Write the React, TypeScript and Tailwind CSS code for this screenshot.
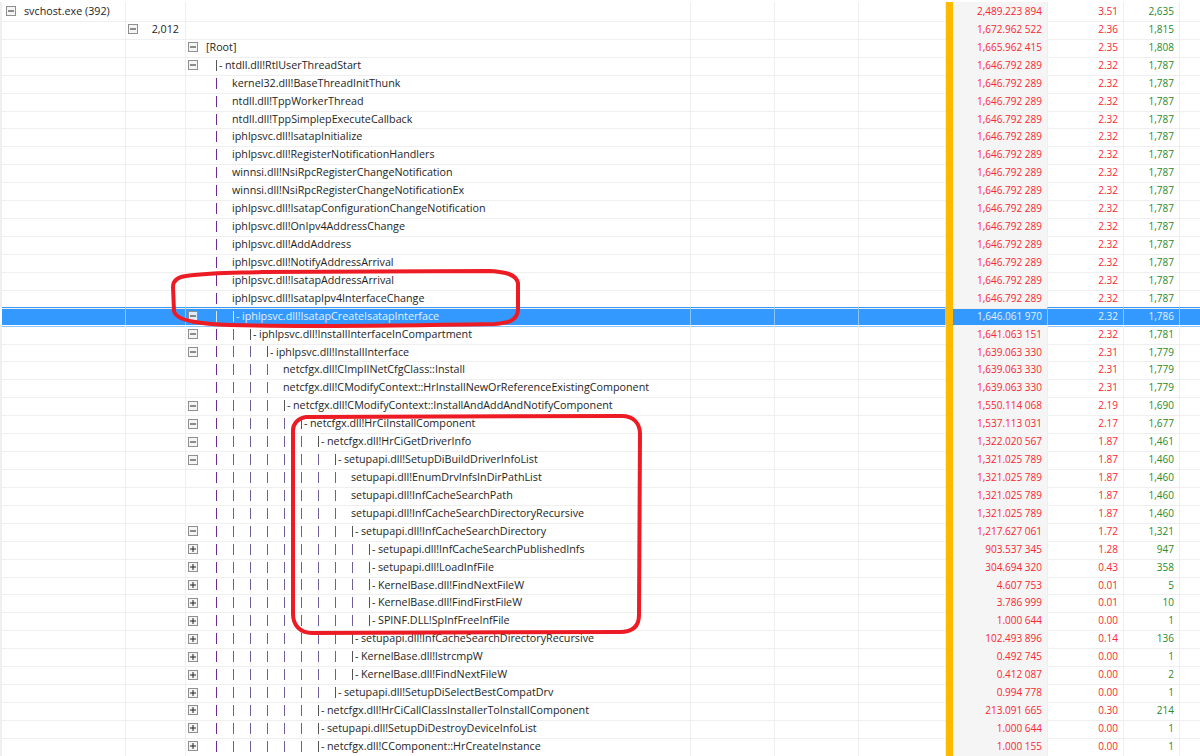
import React from 'react';

type Row = {
  col?: 1 | 2 | 3;
  exp?: '-' | '+';
  bars?: number;
  branch?: boolean;
  name: string;
  time: string;
  pct: string;
  count: string;
};

const t = (name: string, bars: number, branch: boolean, exp: '-' | '+' | undefined, time: string, pct: string, count: string): Row => ({
  col: 3, name, bars, branch, exp, time, pct, count,
});

const base: [string, string, string] = ['1,646.792 289', '2.32', '1,787'];
const cfg: [string, string, string] = ['1,639.063 330', '2.31', '1,779'];
const drv: [string, string, string] = ['1,321.025 789', '1.87', '1,460'];

const rows: Row[] = [
  { col: 1, exp: '-', name: 'svchost.exe (392)', time: '2,489.223 894', pct: '3.51', count: '2,635' },
  { col: 2, exp: '-', name: '2,012', time: '1,672.962 522', pct: '2.36', count: '1,815' },
  { col: 3, exp: '-', name: '[Root]', time: '1,665.962 415', pct: '2.35', count: '1,808' },
  t('ntdll.dll!RtlUserThreadStart', 0, true, '-', ...base),
  t('kernel32.dll!BaseThreadInitThunk', 1, false, undefined, ...base),
  t('ntdll.dll!TppWorkerThread', 1, false, undefined, ...base),
  t('ntdll.dll!TppSimplepExecuteCallback', 1, false, undefined, ...base),
  t('iphlpsvc.dll!IsatapInitialize', 1, false, undefined, ...base),
  t('iphlpsvc.dll!RegisterNotificationHandlers', 1, false, undefined, ...base),
  t('winnsi.dll!NsiRpcRegisterChangeNotification', 1, false, undefined, ...base),
  t('winnsi.dll!NsiRpcRegisterChangeNotificationEx', 1, false, undefined, ...base),
  t('iphlpsvc.dll!IsatapConfigurationChangeNotification', 1, false, undefined, ...base),
  t('iphlpsvc.dll!OnIpv4AddressChange', 1, false, undefined, ...base),
  t('iphlpsvc.dll!AddAddress', 1, false, undefined, ...base),
  t('iphlpsvc.dll!NotifyAddressArrival', 1, false, undefined, ...base),
  t('iphlpsvc.dll!IsatapAddressArrival', 1, false, undefined, ...base),
  t('iphlpsvc.dll!IsatapIpv4InterfaceChange', 1, false, undefined, ...base),
  t('iphlpsvc.dll!IsatapCreateIsatapInterface', 1, true, '-', '1,646.061 970', '2.32', '1,786'),
  t('iphlpsvc.dll!InstallInterfaceInCompartment', 2, true, '-', '1,641.063 151', '2.32', '1,781'),
  t('iphlpsvc.dll!InstallInterface', 3, true, '-', ...cfg),
  t('netcfgx.dll!CImplINetCfgClass::Install', 4, false, undefined, ...cfg),
  t('netcfgx.dll!CModifyContext::HrInstallNewOrReferenceExistingComponent', 4, false, undefined, ...cfg),
  t('netcfgx.dll!CModifyContext::InstallAndAddAndNotifyComponent', 4, true, '-', '1,550.114 068', '2.19', '1,690'),
  t('netcfgx.dll!HrCiInstallComponent', 5, true, '-', '1,537.113 031', '2.17', '1,677'),
  t('netcfgx.dll!HrCiGetDriverInfo', 6, true, '-', '1,322.020 567', '1.87', '1,461'),
  t('setupapi.dll!SetupDiBuildDriverInfoList', 7, true, '-', ...drv),
  t('setupapi.dll!EnumDrvInfsInDirPathList', 8, false, undefined, ...drv),
  t('setupapi.dll!InfCacheSearchPath', 8, false, undefined, ...drv),
  t('setupapi.dll!InfCacheSearchDirectoryRecursive', 8, false, undefined, ...drv),
  t('setupapi.dll!InfCacheSearchDirectory', 8, true, '-', '1,217.627 061', '1.72', '1,321'),
  t('setupapi.dll!InfCacheSearchPublishedInfs', 9, true, '+', '903.537 345', '1.28', '947'),
  t('setupapi.dll!LoadInfFile', 9, true, '+', '304.694 320', '0.43', '358'),
  t('KernelBase.dll!FindNextFileW', 9, true, '+', '4.607 753', '0.01', '5'),
  t('KernelBase.dll!FindFirstFileW', 9, true, '+', '3.786 999', '0.01', '10'),
  t('SPINF.DLL!SpInfFreeInfFile', 9, true, '+', '1.000 644', '0.00', '1'),
  t('setupapi.dll!InfCacheSearchDirectoryRecursive', 8, true, '+', '102.493 896', '0.14', '136'),
  t('KernelBase.dll!lstrcmpW', 8, true, '+', '0.492 745', '0.00', '1'),
  t('KernelBase.dll!FindNextFileW', 8, true, '+', '0.412 087', '0.00', '2'),
  t('setupapi.dll!SetupDiSelectBestCompatDrv', 7, true, '+', '0.994 778', '0.00', '1'),
  t('netcfgx.dll!HrCiCallClassInstallerToInstallComponent', 6, true, '+', '213.091 665', '0.30', '214'),
  t('setupapi.dll!SetupDiDestroyDeviceInfoList', 6, true, '+', '1.000 644', '0.00', '1'),
  t('netcfgx.dll!CComponent::HrCreateInstance', 6, true, '+', '1.000 155', '0.00', '1'),
];

function Expander({ kind }: { kind: '-' | '+' }) {
  return (
    <svg width="10" height="10" viewBox="0 0 10 10" className="shrink-0">
      <rect x="0.5" y="0.5" width="9" height="9" fill="#f4f4f4" fillOpacity="0.9" stroke="#8e8f8f" />
      <path d={kind === '-' ? 'M2 5h6' : 'M2 5h6M5 2v6'} stroke="#222" strokeWidth="1" fill="none" />
    </svg>
  );
}

function Bars({ count, selected }: { count: number; selected: boolean }) {
  return (
    <>
      {Array.from({ length: count }).map((_, i) => (
        <span key={i} className="w-[17px] h-[17px] shrink-0 flex items-center">
          <span className={`w-px h-[11px] ${selected ? 'bg-[#dbeaff]' : i === 0 ? 'bg-[#6a2c91]' : 'bg-[#6f5f96]'}`} />
        </span>
      ))}
    </>
  );
}

function TreeRow({ row, selected }: { row: Row; selected: boolean }) {
  const line = selected ? 'border-[#8cc4ff]' : 'border-[#efefef]';
  const red = selected ? 'text-[#e3f0ff]' : 'text-[#fb2630]';
  const green = selected ? 'text-[#e3f0ff]' : 'text-[#2b8a2b]';
  const ink = selected ? 'text-[#e3f0ff]' : 'text-[#1e1e1e]';

  return (
    <div className={`grid grid-cols-[2px_124px_60px_505px_84px_84px_87px_7px_95px_76px_56px_20px] h-[17.93px] leading-[17.93px] text-[10.75px] ${selected ? 'bg-[#3399ff]' : ''}`}>
      <div className={`border-b ${selected ? 'border-[#efefef] bg-white' : 'border-[#efefef] bg-[#efefef]'}`} />
      <div className={`border-b border-r ${line} ${ink} flex items-center`}>
        {row.col === 1 && (
          <>
            <span className="ml-1 mr-2"><Expander kind="-" /></span>
            <span className="pt-px">{row.name}</span>
          </>
        )}
      </div>
      <div className={`border-b border-r ${line} ${ink} flex items-center`}>
        {row.col === 2 && (
          <>
            <span className="ml-0.5"><Expander kind="-" /></span>
            <span className="ml-auto pr-[6px] pt-px">{row.name}</span>
          </>
        )}
      </div>
      <div className={`border-b border-r ${line} ${ink} flex items-center pl-0.5 whitespace-nowrap`}>
        <span className="w-[18px] shrink-0">{row.col === 3 && row.exp && <Expander kind={row.exp} />}</span>
        {row.bars === undefined ? (
          row.col === 3 && <span className="pt-px">{row.name}</span>
        ) : (
          <>
            <span className="w-2.5 shrink-0" />
            <Bars count={row.bars} selected={selected} />
            {row.branch ? (
              <>
                <span className={`w-px h-[11px] shrink-0 ${selected ? 'bg-[#dbeaff]' : 'bg-[#555]'}`} />
                <span className="w-[8px] shrink-0 pl-[2px] pt-px">-</span>
              </>
            ) : (
              <span className="-ml-px" />
            )}
            <span className="pt-px">{row.name}</span>
          </>
        )}
      </div>
      <div className={`border-b border-r ${line}`} />
      <div className={`border-b border-r ${line}`} />
      <div className={`border-b border-r ${line}`} />
      <div className="border-b border-white bg-[#ffb900]" />
      <div className={`border-b border-r ${line} ${red} text-[10px] pt-px text-right pr-[5px] ${selected ? '' : 'bg-[#f5f5f5]'}`}>{row.time}</div>
      <div className={`border-b border-r ${line} ${red} text-[10px] pt-px text-right pr-[5px]`}>{row.pct}</div>
      <div className={`border-b border-r ${line} ${green} text-[10px] pt-px text-right pr-[5px]`}>{row.count}</div>
      <div className={`border-b ${line}`} />
    </div>
  );
}

export default function App() {
  return (
    <div className="relative h-[756px] w-[1200px] overflow-hidden bg-white pt-[2px] font-['Open_Sans',sans-serif]">
      {rows.map((row, i) => (
        <TreeRow key={i} row={row} selected={i === 17} />
      ))}

      {/* hand drawn annotations on top of the table */}
      <svg className="absolute inset-0 pointer-events-none" width="1200" height="756" fill="none" stroke="#ed1c24" strokeWidth="4" strokeLinejoin="round">
        <path d="M186 276 C 215 272 240 273 262 272 L 490 271 C 505 272 516 274 518 283 L 518 310 C 517 321 508 323 495 324 C 440 325 300 327 230 325 C 205 324 176 322 174 311 L 173 287 C 173 280 178 277 186 276 Z" />
        <path d="M306 417 L 622 416 C 634 416 640 424 640 434 L 639 615 C 639 627 632 632 620 632 L 312 633 C 300 633 293 625 293 614 L 293 430 C 293 424 298 418 306 417 Z" />
      </svg>
    </div>
  );
}
